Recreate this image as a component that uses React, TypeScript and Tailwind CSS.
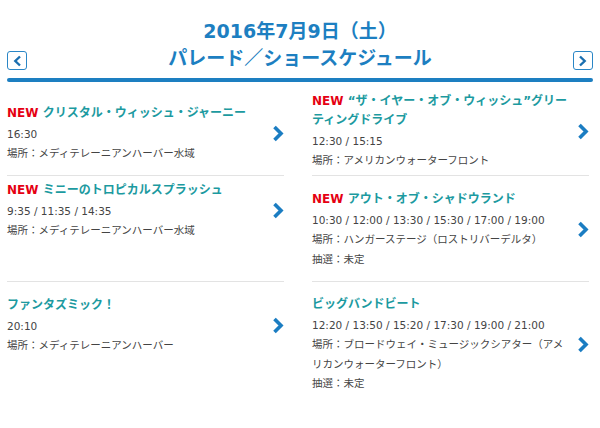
import type { ReactNode } from 'react'

const font = { fontFamily: '"DejaVu Sans", "Noto Sans CJK JP", sans-serif' }

type Show = {
  isNew?: boolean
  title: ReactNode
  times: string
  place: ReactNode
  lottery?: string
  pad: string
}

function Chevron() {
  return (
    <svg width="12" height="17" viewBox="0 0 12 17" className="shrink-0">
      <polyline points="2.5,2 9,8.5 2.5,15" fill="none" stroke="#1b7dc2" strokeWidth="3.6" />
    </svg>
  )
}

function NavButton({ dir }: { dir: 'left' | 'right' }) {
  return (
    <button
      type="button"
      className="mt-[7px] flex h-[19px] w-[20px] items-center justify-center rounded-[3px] border-[1.5px] border-[#2a86c6] bg-white"
    >
      <svg width="9" height="12" viewBox="0 0 9 12">
        <polyline
          points={dir === 'left' ? '7,1.5 2.3,6 7,10.5' : '2,1.5 6.7,6 2,10.5'}
          fill="none"
          stroke="#1b6fb0"
          strokeWidth="2.4"
        />
      </svg>
    </button>
  )
}

function Cell({ show, last }: { show: Show; last?: boolean }) {
  return (
    <div className={`${show.pad} ${last ? '' : 'border-b border-[#e3e3e3]'}`}>
      <div className="flex items-center justify-between">
        <div className="w-[258px]">
          <p className="whitespace-nowrap text-[12px] font-bold leading-[19px] text-[#1c9aa0]">
            {show.isNew && <span className="text-[#e50012]">NEW </span>}
            {show.title}
          </p>
          <p className="mt-[1px] whitespace-nowrap text-[10.5px] leading-[20px] text-[#444]">
            {show.times}
          </p>
          <p className="whitespace-nowrap text-[10.5px] leading-[19.5px] text-[#444]">{show.place}</p>
          {show.lottery && (
            <p className="text-[10.5px] leading-[19.5px] text-[#444]">{show.lottery}</p>
          )}
        </div>
        <Chevron />
      </div>
    </div>
  )
}

const left: Show[] = [
  {
    isNew: true,
    title: 'クリスタル・ウィッシュ・ジャーニー',
    times: '16:30',
    place: '場所：メディテレーニアンハーバー水域',
    pad: 'pt-[22px]',
  },
  {
    isNew: true,
    title: 'ミニーのトロピカルスプラッシュ',
    times: '9:35 / 11:35 / 14:35',
    place: '場所：メディテレーニアンハーバー水域',
    pad: 'pt-[5px]',
  },
  {
    title: 'ファンタズミック！',
    times: '20:10',
    place: '場所：メディテレーニアンハーバー',
    pad: 'pt-[14px]',
  },
]

const right: Show[] = [
  {
    isNew: true,
    title: (
      <>
        “ザ・イヤー・オブ・ウィッシュ”グリー
        <br />
        ティングドライブ
      </>
    ),
    times: '12:30 / 15:15',
    place: '場所：アメリカンウォーターフロント',
    pad: 'pt-[10px]',
  },
  {
    isNew: true,
    title: 'アウト・オブ・シャドウランド',
    times: '10:30 / 12:00 / 13:30 / 15:30 / 17:00 / 19:00',
    place: '場所：ハンガーステージ（ロストリバーデルタ）',
    lottery: '抽選：未定',
    pad: 'pt-[14px]',
  },
  {
    title: 'ビッグバンドビート',
    times: '12:20 / 13:50 / 15:20 / 17:30 / 19:00 / 21:00',
    place: (
      <>
        場所：ブロードウェイ・ミュージックシアター（アメ
        <br />
        リカンウォーターフロント）
      </>
    ),
    lottery: '抽選：未定',
    pad: 'pt-[13px]',
  },
]

export default function App() {
  return (
    <div className="h-[428px] w-[600px] overflow-hidden bg-white px-[7px]" style={font}>
      <header className="pt-[18px]">
        <h1 className="text-center text-[19px] font-bold leading-[26px] text-[#1d7fc1]">
          2016年7月9日（土）
        </h1>
        <div className="flex items-start justify-between">
          <NavButton dir="left" />
          <h2 className="pt-[1px] text-[19px] font-bold leading-[26px] text-[#1d7fc1]">
            パレード／ショースケジュール
          </h2>
          <NavButton dir="right" />
        </div>
        <div className="mt-[7px] h-[4px] rounded-full bg-[#1d7fc1]" />
      </header>

      <div className="grid grid-cols-[277px_277px] grid-rows-[94px_106px_auto] gap-x-[28px]">
        {[0, 1, 2].map((i) => [
          <Cell key={`l${i}`} show={left[i]} last={i === 2} />,
          <Cell key={`r${i}`} show={right[i]} last={i === 2} />,
        ])}
      </div>
    </div>
  )
}
